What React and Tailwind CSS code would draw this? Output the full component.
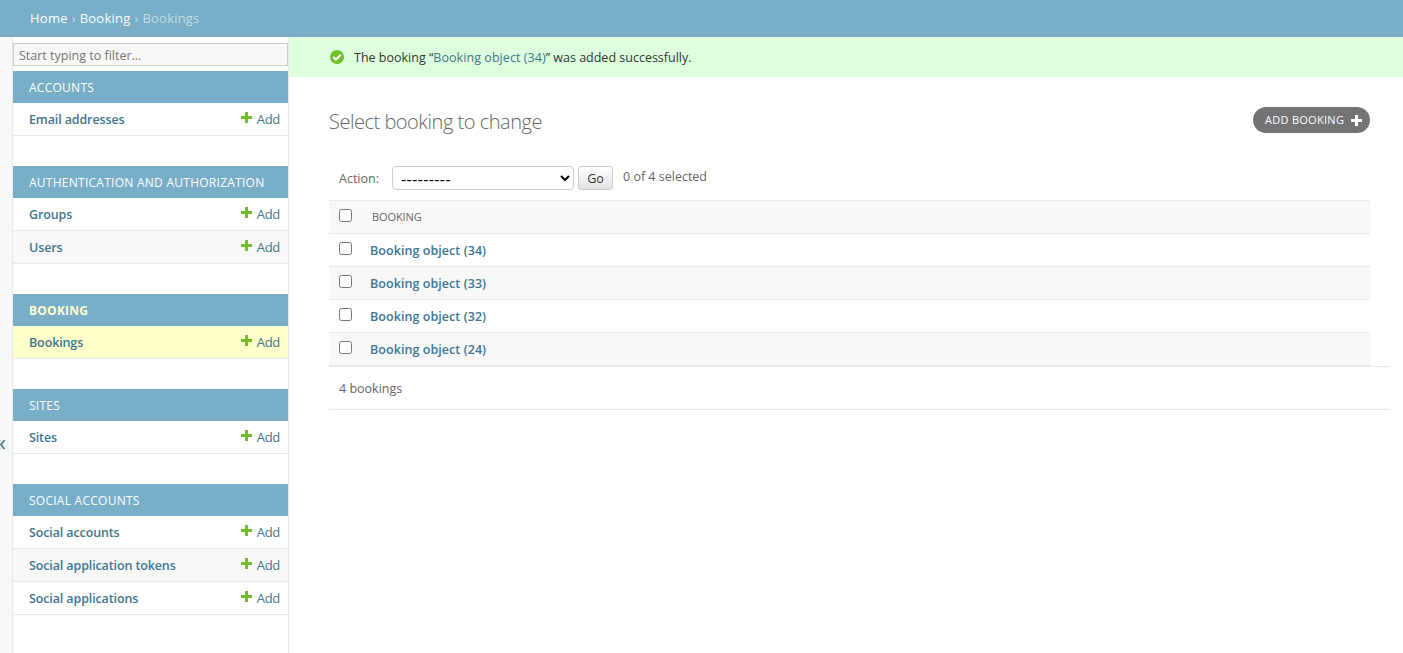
const sections = [
  { title: 'Accounts', rows: ['Email addresses'] },
  { title: 'Authentication and Authorization', rows: ['Groups', 'Users'] },
  { title: 'Booking', rows: ['Bookings'], current: true },
  { title: 'Sites', rows: ['Sites'] },
  { title: 'Social Accounts', rows: ['Social accounts', 'Social application tokens', 'Social applications'] },
];

const bookings = [34, 33, 32, 24];

function Plus({ className }) {
  return (
    <svg className={className} viewBox="0 0 11 11" fill="currentColor" aria-hidden="true">
      <path d="M4 0h3v4h4v3H7v4H4V7H0V4h4z" />
    </svg>
  );
}

function AppSection({ title, rows, current }) {
  return (
    <section className="mb-[30px]">
      <h2
        className={
          current
            ? 'flex h-8 items-center bg-[#79aec8] px-4 pt-0.5 text-[12px] font-bold tracking-[0.24px] text-[#ffffcc] uppercase'
            : 'flex h-8 items-center bg-[#79aec8] px-4 pt-0.5 text-[12px] tracking-[0.26px] text-white uppercase'
        }
      >
        {title}
      </h2>
      {rows.map((row) => (
        <div
          key={row}
          className={
            current
              ? 'flex h-[33px] items-center justify-between border-b border-[#e8e8e8] bg-[#ffffcc] pr-2 pl-4 text-[#417690]'
              : 'flex h-[33px] items-center justify-between border-b border-[#e8e8e8] pr-2 pl-4 text-[#417690] odd:bg-[#f8f8f8]'
          }
        >
          <a className="pt-0.5 font-semibold tracking-[-0.12px]">{row}</a>
          <a className="flex items-center gap-[5px]">
            <Plus className="mb-[3px] size-[11px] text-[#70bf2b]" />
            <span className="text-[13px] tracking-[-0.3px]">Add</span>
          </a>
        </div>
      ))}
    </section>
  );
}

function Checkbox() {
  return <input type="checkbox" className="mb-[3px] ml-[10px] size-[13px] shrink-0" />;
}

export default function App() {
  return (
    <div className="flex h-[653px] flex-col overflow-hidden bg-white font-['Open_Sans',sans-serif] text-[12.5px] leading-4 text-[#333]">
      <nav className="flex h-[37px] shrink-0 items-center gap-1 bg-[#79aec8] px-[30px] pb-0.5 text-[13px] text-[#c4dce8]">
        <a className="font-medium tracking-[0.25px] text-white">Home</a>
        <span>›</span>
        <a className="font-medium tracking-[0.25px] text-white">Booking</a>
        <span>›</span>
        <span className="tracking-[0.2px]">Bookings</span>
      </nav>
      <div className="flex min-h-0 flex-1">
        <button className="flex w-[13px] shrink-0 items-center justify-end border-r border-[#e8e8e8] bg-[#f8f8f8] pt-[194px] pr-[6px] text-[23px] text-[#417690]">
          <span>«</span>
        </button>
        <aside className="w-[276px] shrink-0 border-r border-[#e8e8e8] pt-[6px]">
          <input
            className="mb-[5px] block h-[23px] w-[275px] border border-[#ccc] bg-[#f8f8f8] px-[5px] pt-0.5 text-[12.5px] placeholder:text-[#757575]"
            placeholder="Start typing to filter…"
          />
          {sections.map((s) => (
            <AppSection key={s.title} {...s} />
          ))}
        </aside>
        <main className="min-w-0 flex-1">
          <div className="flex h-10 items-center gap-[10px] bg-[#ddffdd] pl-[41px]">
            <svg className="size-[14px]" viewBox="0 0 14 14" aria-hidden="true">
              <circle cx="7" cy="7" r="7" fill="#70bf2b" />
              <path d="M3.3 7l2.6 2.6 4.8-4.8" fill="none" stroke="#fff" strokeWidth="2" />
            </svg>
            <p className="pt-0.5">
              The booking “<a className="tracking-[0.06px] text-[#417690]">Booking object (34)</a>” was added successfully.
            </p>
          </div>
          <div className="flex items-center justify-between pt-[30px] pr-[33px] pl-10">
            <h1 className="h-[26px] pt-0.5 text-[20px] leading-[26px] font-light tracking-[-0.48px] text-[#666]">
              Select booking to change
            </h1>
            <a className="flex h-[26px] w-[117px] items-center justify-between rounded-full bg-[#747474] pr-2 pl-3 text-[11px] tracking-[0.28px] text-white">
              ADD BOOKING
              <Plus className="size-[11px]" />
            </a>
          </div>
          <div className="mt-[33px] ml-[50px] flex h-6 items-center text-[#666]">
            <label className="w-[53px] pt-0.5">Action:</label>
            <select className="h-6 w-[182px] rounded-[4px] border border-[#ccc] bg-white pl-1 text-[16px] leading-4 tracking-[0.4px] text-black">
              <option>---------</option>
            </select>
            <button className="ml-1 h-6 w-[35px] rounded-[3px] border border-[#ccc] bg-linear-to-b from-white to-[#e2e2e2] pt-0.5 text-[12.5px] text-[#333]">
              Go
            </button>
            <span className="mb-0.5 ml-[10px]">0 of 4 selected</span>
          </div>
          <div className="mt-[10px] mr-[33px] ml-10">
            <div className="flex h-[34px] items-center border-y border-[#e8e8e8] bg-[#f8f8f8] text-[#666]">
              <Checkbox />
              <span className="ml-5 text-[11px] font-medium tracking-[-0.1px]">BOOKING</span>
            </div>
            {bookings.map((id) => (
              <div key={id} className="flex h-[33px] items-center border-b border-[#e8e8e8] even:bg-white odd:bg-[#f8f8f8]">
                <Checkbox />
                <a className="ml-[18px] pt-0.5 font-semibold tracking-[0.06px] text-[#417690]">Booking object ({id})</a>
              </div>
            ))}
          </div>
          <p className="mr-[13px] ml-10 flex h-11 items-center border-y border-[#e8e8e8] pt-0.5 pl-[10px] text-[#666]">4 bookings</p>
        </main>
      </div>
    </div>
  );
}
